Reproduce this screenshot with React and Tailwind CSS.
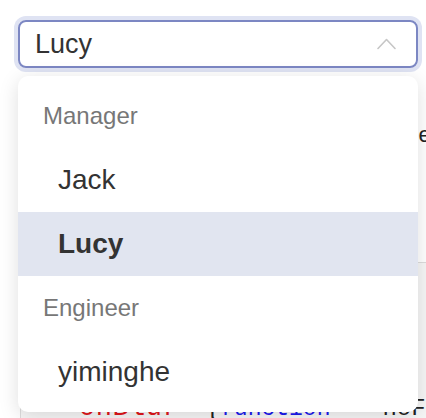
import React from "react";

function ChevronUp() {
  return (
    <svg width="19" height="12" viewBox="0 0 19 12" fill="none">
      <path d="M1 10.5 L9.5 1.5 L18 10.5" stroke="#c6c6c6" strokeWidth="1.6" strokeLinecap="round" strokeLinejoin="round" />
    </svg>
  );
}

export default function App() {
  const font = { fontFamily: '"Liberation Sans", Arial, sans-serif' };
  return (
    <div className="relative w-[426px] h-[418px] overflow-hidden bg-white" style={font}>
      {/* underlying page */}
      <div className="pt-[20px] pl-[18px]">
        <div className="w-[400px] h-[48px] rounded-[8px] border-2 border-[#7c87c3] ring-4 ring-[#dfe3f3] flex items-center justify-between pl-[15px] pr-[20px]">
          <span className="text-[27px] text-[#333]">Lucy</span>
          <ChevronUp />
        </div>
        <div className="mt-[52px] w-[420px] flex justify-end text-[22px] text-[#222] leading-[30px] whitespace-nowrap">
          Grouped by Manager and Engineer
        </div>
        <div className="mt-[112px] ml-[2px] w-[440px] h-[200px] border border-[#dcdcdc] bg-[#f6f6f6] pt-[10px] pl-[58px] text-[24px] leading-[30px] whitespace-nowrap" style={{ fontFamily: '"Liberation Mono", monospace' }}>
          <div className="text-[#222]">&lt;Select</div>
          <div className="text-[#222]">value="lucy"</div>
          <div className="text-[#222]">style=&#123;&#123;&#125;&#125;</div>
          <div className="text-[#222]">onChange=&#123;handle&#125;</div>
          <div className="flex items-baseline">
            <span className="text-[#e0161b] text-[27px] tracking-[0.5px]">onBlur</span>
            <span className="text-[#222] ml-[12px]">=&#123;</span>
            <span className="text-[#1a1aee] text-[23px]">function</span>
            <span className="text-[#222] ml-[52px]">noF</span>
          </div>
        </div>
      </div>

      {/* dropdown overlay */}
      <div className="absolute left-[18px] top-[76px] w-[400px] h-[336px] bg-white rounded-[10px] py-[8px] shadow-[0_4px_20px_rgba(0,0,0,0.13)]">
        <div className="h-[64px] flex items-center pl-[25px] text-[24px] text-[#777]">Manager</div>
        <div className="h-[64px] flex items-center pl-[40px] text-[28px] text-[#333]">Jack</div>
        <div className="h-[64px] flex items-center pl-[40px] text-[28px] text-[#333] font-bold bg-[#e1e5f0]">Lucy</div>
        <div className="h-[64px] flex items-center pl-[25px] text-[24px] text-[#777]">Engineer</div>
        <div className="h-[64px] flex items-center pl-[40px] text-[28px] text-[#333]">yiminghe</div>
      </div>
    </div>
  );
}
